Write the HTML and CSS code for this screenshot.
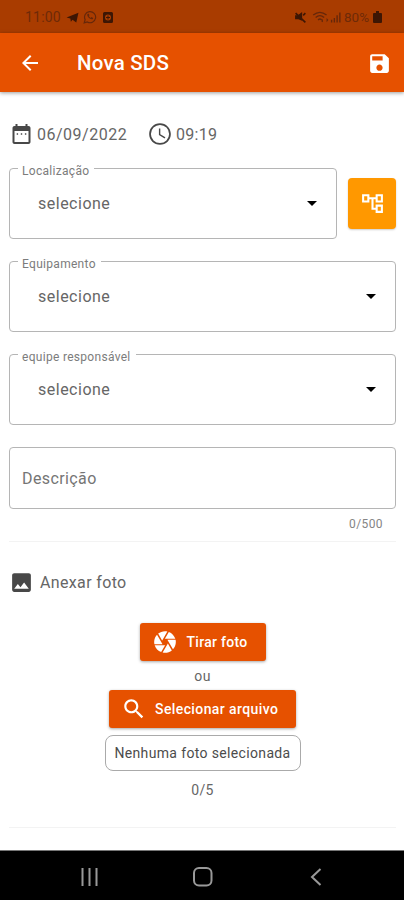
FILE: index.html
```html
<!DOCTYPE html>
<html lang="pt-BR">
<head>
<meta charset="utf-8">
<title>Nova SDS</title>
<link rel="stylesheet" href="styles.css">
</head>
<body>
<div class="screen">
  <div class="status">
    <span class="clock">11:00</span>
    <svg class="tg" viewBox="0 0 24 24" width="13" height="13"><path d="M1 12 23 3l-4 18-7-5-3 4-1-6z"/></svg>
    <svg class="wa" viewBox="0 0 24 24" width="14" height="14"><path d="M2 22l1.700-5.500A9.500 9.500 0 1 1 7.500 20.500z" fill="none" stroke="currentColor" stroke-width="2"/><path d="M8 6.500c-3 3 4 11 9 9l.5-2-3-1.500-1.500 1.500-3-3 1-1.500L10 6.500z"/></svg>
    <svg class="app" viewBox="0 0 24 24" width="12" height="13"><path fill-rule="evenodd" d="M5 1h14q3 0 3 3v16q0 3-3 3H5q-3 0-3-3V4q0-3 3-3zm7 5a6 6 0 1 0 0 12 6 6 0 0 0 0-12z"/><path d="M11 8h2v3h3v2h-3v3h-2v-3H8v-2h3z"/></svg>
    <span class="grow"></span>
    <svg class="mute" viewBox="0 0 24 24" width="13" height="13"><path d="M2 8h5l8-6v16L8 15H2z"/><path d="M3 4l18 17M17 8l4-4" fill="none" stroke="currentColor" stroke-width="3"/></svg>
    <svg class="wifi" viewBox="0 0 28 24" width="17" height="15"><path d="M2 8q11-9 22 0M6 12q7-6 14 0M10 16q3-3 6 0" fill="none" stroke="currentColor" stroke-width="2.200"/><path d="M18 20v-6l-3 4zM24 13v7l3-4z"/></svg>
    <svg class="signal" viewBox="0 0 12 12" width="11" height="12"><path d="M1 9h1.500v3H1zM4 7h1.500v5H4zM7 4h1.500v8H7zM10 1h1.500v11H10z"/></svg>
    <span class="pct">80%</span>
    <svg class="bat" viewBox="0 0 9 12" width="9" height="12"><path d="M3 0h3v2h2q1 0 1 1v8q0 1-1 1H1q-1 0-1-1V3q0-1 1-1h2z"/></svg>
  </div>
  <header class="bar">
    <svg viewBox="0 0 24 24" width="24" height="24"><path d="M20 11H7.830l5.590-5.590L12 4l-8 8 8 8 1.410-1.410L7.830 13H20v-2z"/></svg>
    <h1>Nova SDS</h1>
    <svg viewBox="0 0 24 24" width="25" height="25"><path d="M17 3H5c-1.110 0-2 .9-2 2v14c0 1.100.89 2 2 2h14c1.100 0 2-.9 2-2V7l-4-4zm-5 16c-1.660 0-3-1.340-3-3s1.340-3 3-3 3 1.340 3 3-1.340 3-3 3zm3-10H5V5h10v4z"/></svg>
  </header>
  <main>
    <div class="when">
      <svg viewBox="0 0 24 24" width="25" height="24"><path d="M8.600 11.300H7.200v1.400h1.400zm4.100 0h-1.400v1.400h1.400zm4.100 0h-1.400v1.400h1.400zM19 4h-1V2h-2v2H8V2H6v2H5c-1.110 0-1.990.9-1.990 2L3 20c0 1.100.89 2 2 2h14c1.100 0 2-.9 2-2V6c0-1.100-.9-2-2-2zm0 16H5V9h14v11z"/></svg>
      <span class="date">06/09/2022</span>
      <svg viewBox="0 0 24 24" width="26" height="26"><path d="M11.990 2C6.470 2 2 6.480 2 12s4.470 10 9.990 10C17.520 22 22 17.520 22 12S17.520 2 11.990 2zM12 20.400a8.400 8.400 0 1 1 0-16.800 8.400 8.400 0 0 1 0 16.800z"/><path d="M12.300 7H11v6l5.250 3.150.75-1.230-4.700-2.700z"/></svg>
      <span class="time">09:19</span>
    </div>
    <div class="row">
      <div class="field"><span class="label">Localização</span><span class="value">selecione</span><svg class="caret" viewBox="0 0 10 5" width="10" height="5"><path d="M0 0h10L5 5z"/></svg></div>
      <button class="tree"><svg viewBox="0 0 24 24" width="25" height="25"><path d="M22 11V3h-7v3H9V3H2v8h7V8h2v10h4v3h7v-8h-7v3h-2V8h2v3h7zM7 9H4V5h3v4zm10 6h3v4h-3v-4zm0-10h3v4h-3V5z"/></svg></button>
    </div>
    <div class="field"><span class="label">Equipamento</span><span class="value">selecione</span><svg class="caret" viewBox="0 0 10 5" width="10" height="5"><path d="M0 0h10L5 5z"/></svg></div>
    <div class="field"><span class="label">equipe responsável</span><span class="value">selecione</span><svg class="caret" viewBox="0 0 10 5" width="10" height="5"><path d="M0 0h10L5 5z"/></svg></div>
    <div class="desc">Descrição</div>
    <div class="count">0/500</div>
    <div class="rule"></div>
    <div class="attach">
      <svg viewBox="0 0 24 24" width="25" height="25"><path d="M21 19V5c0-1.100-.9-2-2-2H5c-1.100 0-2 .9-2 2v14c0 1.100.9 2 2 2h14c1.100 0 2-.9 2-2zM8.500 13.500l2.500 3.010L14.500 12l4.500 6H5l3.500-4.500z"/></svg>
      <span>Anexar foto</span>
    </div>
    <div class="actions">
      <button class="btn b1"><svg viewBox="0 0 24 24" width="26" height="26"><path d="M9.400 10.500l4.770-8.260C13.470 2.090 12.750 2 12 2c-2.400 0-4.600.85-6.320 2.250l3.660 6.350.06-.1zM21.540 9c-.92-2.920-3.150-5.260-6-6.340L11.880 9h9.660zm.26 1h-7.490l.29.5 4.760 8.250C21 16.970 22 14.610 22 12c0-.69-.07-1.350-.2-2zM8.540 12l-3.900-6.750C3.010 7.030 2 9.390 2 12c0 .69.07 1.350.2 2h7.490l-1.150-2zm-6.080 3c.92 2.920 3.150 5.260 6 6.340L12.120 15H2.460zm11.270 0l-3.900 6.760c.7.150 1.420.24 2.170.24 2.400 0 4.600-.85 6.320-2.250l-3.660-6.350-.93 1.600z"/></svg><span>Tirar foto</span></button>
      <span class="or">ou</span>
      <button class="btn b2"><svg viewBox="0 0 24 24" width="26" height="26"><path d="M15.500 14h-.79l-.28-.27C15.410 12.590 16 11.110 16 9.500 16 5.910 13.090 3 9.500 3S3 5.910 3 9.500 5.910 16 9.500 16c1.610 0 3.090-.59 4.230-1.570l.27.28v.79l5 4.990L20.490 19l-4.990-5zm-6 0C7.010 14 5 11.990 5 9.500S7.010 5 9.500 5 14 7.010 14 9.500 11.990 14 9.500 14z"/></svg><span>Selecionar arquivo</span></button>
      <div class="none">Nenhuma foto selecionada</div>
      <span class="total">0/5</span>
    </div>
    <div class="rule"></div>
  </main>
  <nav>
    <svg viewBox="0 0 20 20" width="20" height="20"><path d="M2.500 1v18M9.500 1v18M16.500 1v18"/></svg>
    <svg viewBox="0 0 20 20" width="20" height="20"><rect x="1" y="1" width="17.500" height="17.500" rx="5"/></svg>
    <svg viewBox="0 0 20 20" width="20" height="20"><path d="M15.500 2 7 10l8.500 8"/></svg>
  </nav>
</div>
</body>
</html>
```
FILE: styles.css
```css
* { box-sizing: border-box; }
body { margin: 0; background: #fff; font-family: Roboto, "Liberation Sans", sans-serif; color: #666; }
svg { display: block; flex: none; fill: currentColor; }
.screen { width: 404px; height: 900px; display: flex; flex-direction: column; overflow: hidden; }
.status { height: 33px; flex: none; background: #a93c00; color: #3d1604; display: flex; align-items: center; padding: 1px 22px 0 25px; font-size: 14px; }
.clock { color: #6e2a08; width: 41px; letter-spacing: .2px; }
.wa { margin-left: 4px; color: #65270a; }
.app { margin-left: 5px; }
.grow { flex: 1; }
.mute { margin-right: 2px; }
.wifi { margin-left: 3px; color: #65270a; }
.signal { margin-left: 1px; color: #65270a; }
.pct { margin-left: 3px; color: #6e2a08; width: 29px; font-size: 13.500px; white-space: nowrap; }
.bar { height: 59px; flex: none; background: #e65100; color: #fff; display: flex; align-items: center; padding: 1px 12px 0 18px; box-shadow: 0 1px 4px rgba(0,0,0,.4); position: relative; }
h1 { flex: 1; margin: 0 0 0 35px; font-size: 20.500px; font-weight: 500; line-height: 24px; letter-spacing: .2px; }
main { flex: 1; padding: 29px 8px 0 9px; font-size: 16px; }
.when { height: 26px; display: flex; align-items: center; }
.date { margin-left: 3px; width: 110px; letter-spacing: .5px; }
.time { margin-left: 3px; letter-spacing: .3px; }
.row { display: flex; align-items: center; gap: 11px; margin-top: 21px; }
.row .field { flex: 1; margin-top: 0; }
.field { position: relative; height: 71px; margin-top: 22px; border: 1px solid #b5b5b5; border-radius: 4px; display: flex; align-items: center; justify-content: space-between; padding: 0 19px 1px 28px; }
.value { letter-spacing: .5px; }
.caret { color: #000; }
.label { position: absolute; left: 8px; top: -7px; padding: 0 5px 0 4px; background: #fff; font-size: 12px; line-height: 18px; letter-spacing: .3px; color: #7c7c7c; white-space: nowrap; }
.tree { width: 48px; height: 51px; padding: 0; border: 0; border-radius: 4px; background: #ff9800; color: #fff; display: grid; place-items: center; box-shadow: 0 1px 2px rgba(0,0,0,.2); }
.desc { height: 62px; margin-top: 22px; border: 1px solid #b5b5b5; border-radius: 4px; display: flex; align-items: center; padding-left: 12px; letter-spacing: .4px; color: #757575; }
.count { height: 32px; line-height: 31px; text-align: right; padding-right: 13px; font-size: 12px; letter-spacing: .4px; color: #858585; }
.rule { height: 1px; background: #f3f3f3; }
.attach { margin-top: 28px; height: 25px; display: flex; align-items: center; gap: 6px; letter-spacing: .35px; }
.attach svg, .when svg { color: #484848; }
.actions { margin-top: 28px; height: 204px; display: flex; flex-direction: column; align-items: center; }
.btn { height: 38px; flex: none; padding: 0; border: 0; border-radius: 3px; background: #e65100; color: #fff; font: 500 14px Roboto, "Liberation Sans", sans-serif; display: flex; align-items: center; box-shadow: 0 1px 3px rgba(0,0,0,.35); white-space: nowrap; }
.b1 { width: 126px; padding-left: 12px; gap: 9px; letter-spacing: .3px; }
.b2 { width: 187px; padding-left: 12px; gap: 8px; letter-spacing: .4px; }
.or { height: 29px; line-height: 30px; font-size: 14px; letter-spacing: .3px; }
.none { width: 196px; height: 36px; flex: none; margin-top: 7px; border: 1px solid #aaa; border-radius: 8px; display: grid; place-items: center; font-size: 14px; color: #4c4c4c; letter-spacing: .35px; white-space: nowrap; }
.total { height: 39px; line-height: 39px; font-size: 14px; letter-spacing: .3px; }
nav { height: 50px; flex: none; border-top: 1px solid #777; background: #000; color: #999; display: flex; justify-content: space-between; align-items: center; padding: 3px 79px 0 80px; }
nav svg { fill: none; stroke: currentColor; stroke-width: 2; }
```
